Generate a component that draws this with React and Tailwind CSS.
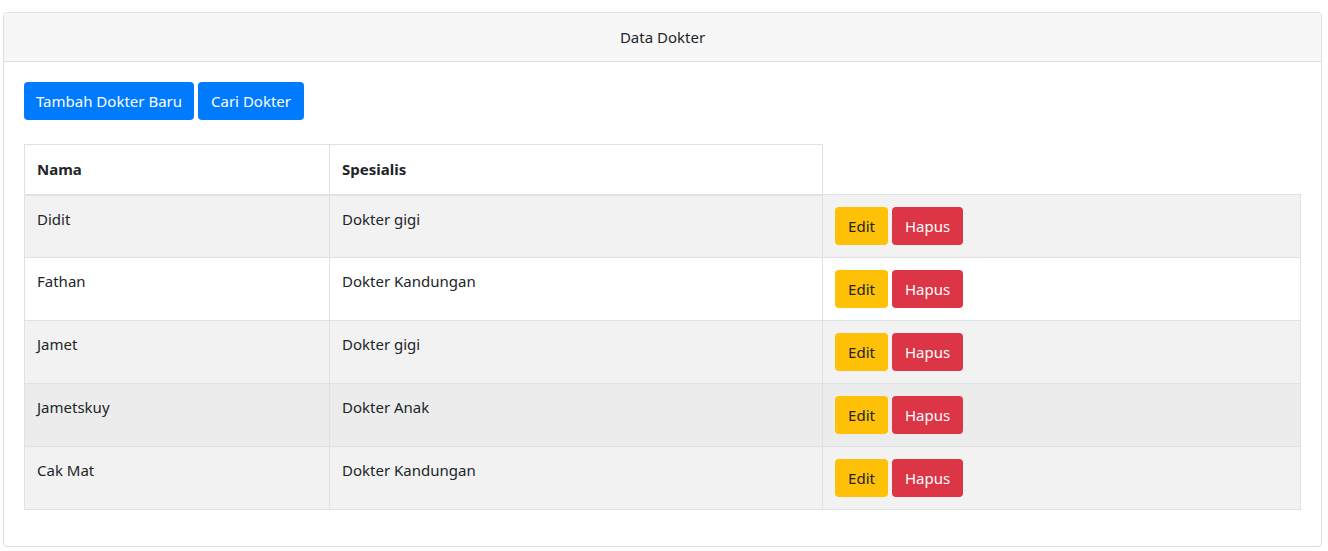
export default function App() {
  const rows = [
    ["Didit", "Dokter gigi", "bg-[#f2f2f2]"],
    ["Fathan", "Dokter Kandungan", "bg-white"],
    ["Jamet", "Dokter gigi", "bg-[#f2f2f2]"],
    ["Jametskuy", "Dokter Anak", "bg-[#ececec]"],
    ["Cak Mat", "Dokter Kandungan", "bg-[#f2f2f2]"],
  ];
  return (
    <div className="bg-white min-h-[551px] pt-[12px] pl-[3px] text-[#212529] text-[16px]" style={{ fontFamily: '"Noto Sans", "Open Sans", sans-serif' }}>
      <div className="w-[1319px] h-[535px] border border-[#dfdfdf] rounded-[4px] overflow-hidden">
        <div className="h-[49px] bg-[#f7f7f7] border-b border-[#dfdfdf] flex items-center justify-center text-[15px]">
          Data Dokter
        </div>
        <div className="p-[20px]">
          <div className="flex gap-[4px]">
            <button className="h-[38px] w-[170px] bg-[#007bff] text-white rounded-[4px] text-[15px]">Tambah Dokter Baru</button>
            <button className="h-[38px] w-[106px] bg-[#007bff] text-white rounded-[4px] text-[15px]">Cari Dokter</button>
          </div>
          <table className="mt-[24px] w-[1277px] text-[15px]">
            <thead>
              <tr>
                <th className="w-[305px] h-[50px] text-left font-bold px-[12px] border border-[#dee2e6] border-b-2">Nama</th>
                <th className="w-[493px] text-left font-bold px-[12px] border border-[#dee2e6] border-b-2">Spesialis</th>
              </tr>
            </thead>
            <tbody>
              {rows.map(([n, s, bg]) => (
                <tr key={n} className={bg}>
                  <td className="h-[63px] px-[12px] pt-[12px] align-top border border-[#dee2e6]">{n}</td>
                  <td className="px-[12px] pt-[12px] align-top border border-[#dee2e6]">{s}</td>
                  <td className="px-[12px] align-middle border border-[#dee2e6]">
                    <div className="flex gap-[4px]">
                      <button className="h-[38px] w-[53px] bg-[#ffc107] text-[#212529] rounded-[4px] text-[15px]">Edit</button>
                      <button className="h-[38px] w-[71px] bg-[#dc3545] text-white rounded-[4px] text-[15px]">Hapus</button>
                    </div>
                  </td>
                </tr>
              ))}
            </tbody>
          </table>
        </div>
      </div>
    </div>
  );
}
